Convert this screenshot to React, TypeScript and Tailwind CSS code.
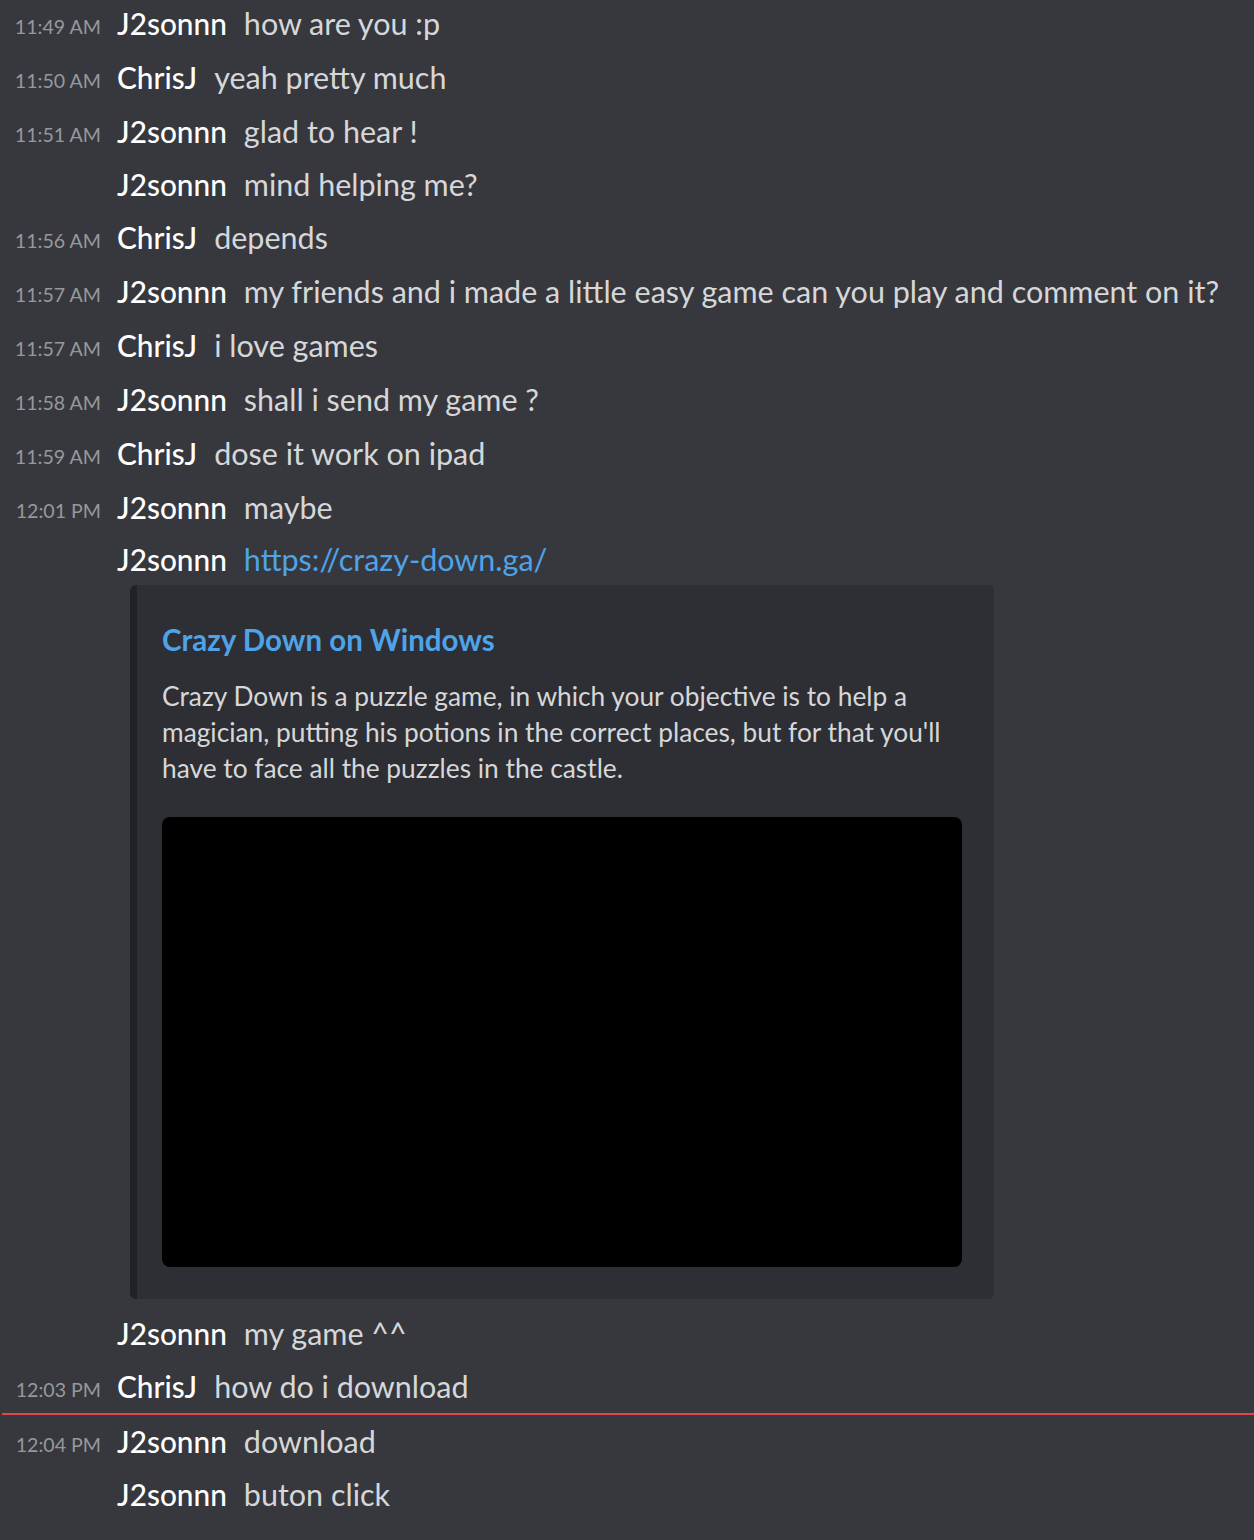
import React from "react";

type Row = {
  time?: string;
  name: string;
  text: string;
  link?: boolean;
  h: string;
};

const top: Row[] = [
  { time: "11:49 AM", name: "J2sonnn", text: "how are you :p", h: "h-[54px]" },
  { time: "11:50 AM", name: "ChrisJ", text: "yeah pretty much", h: "h-[54px]" },
  { time: "11:51 AM", name: "J2sonnn", text: "glad to hear !", h: "h-[54px]" },
  { name: "J2sonnn", text: "mind helping me?", h: "h-[52px]" },
  { time: "11:56 AM", name: "ChrisJ", text: "depends", h: "h-[54px]" },
  {
    time: "11:57 AM",
    name: "J2sonnn",
    text: "my friends and i made a little easy game can you play and comment on it?",
    h: "h-[54px]",
  },
  { time: "11:57 AM", name: "ChrisJ", text: "i love games", h: "h-[54px]" },
  { time: "11:58 AM", name: "J2sonnn", text: "shall i send my game ?", h: "h-[54px]" },
  { time: "11:59 AM", name: "ChrisJ", text: "dose it work on ipad", h: "h-[54px]" },
  { time: "12:01 PM", name: "J2sonnn", text: "maybe", h: "h-[54px]" },
  { name: "J2sonnn", text: "https://crazy-down.ga/", link: true, h: "h-[50px]" },
];

function Message({ row }: { row: Row }) {
  return (
    <div className={`flex items-center ${row.h}`}>
      <div className="w-[101px] shrink-0 text-right text-[19.6px] text-[#96989c] pt-[5px]">
        {row.time}
      </div>
      <div className="ml-[16px] flex items-center whitespace-nowrap">
        <span className="text-[29.8px] font-medium text-white">{row.name}</span>
        <span
          className={`ml-[17px] text-[30.5px] ${row.link ? "text-[#4fa3e8]" : "text-[#d6d7d9]"}`}
        >
          {row.text}
        </span>
      </div>
    </div>
  );
}

export default function App() {
  return (
    <div
      className="min-h-[1540px] w-full overflow-hidden bg-[#37383e]"
      style={{ fontFamily: "Lato, 'Open Sans', sans-serif" }}
    >
      <div className="-mt-[3px]">
        {top.map((r, i) => (
          <Message key={i} row={r} />
        ))}

        <div className="ml-[130px] w-[864px] rounded-[6px] border-l-[7px] border-[#202225] bg-[#2e2f34] pl-[25px] pr-[32px] pt-[39px] pb-[32px]">
          <div className="h-[32px] text-[29.5px] font-bold leading-[32px] text-[#4fa3e8]">
            Crazy Down on Windows
          </div>
          <p className="mt-[22px] whitespace-nowrap text-[26.3px] leading-[36px] text-[#d6d7d9]">
            Crazy Down is a puzzle game, in which your objective is to help a
            <br />
            magician, putting his potions in the correct places, but for that you'll
            <br />
            have to face all the puzzles in the castle.
          </p>
          <div className="mt-[31px] h-[450px] w-[800px] rounded-[8px] bg-black" />
        </div>

        <div className="mt-[8px]">
          <Message row={{ name: "J2sonnn", text: "my game ^^", h: "h-[54px]" }} />
          <Message
            row={{ time: "12:03 PM", name: "ChrisJ", text: "how do i download", h: "h-[52px]" }}
          />
          <div className="ml-[2px] h-[2px] bg-[#e0474b]" />
          <Message
            row={{ time: "12:04 PM", name: "J2sonnn", text: "download", h: "h-[54px]" }}
          />
          <Message row={{ name: "J2sonnn", text: "buton click", h: "h-[52px]" }} />
        </div>
      </div>
    </div>
  );
}
